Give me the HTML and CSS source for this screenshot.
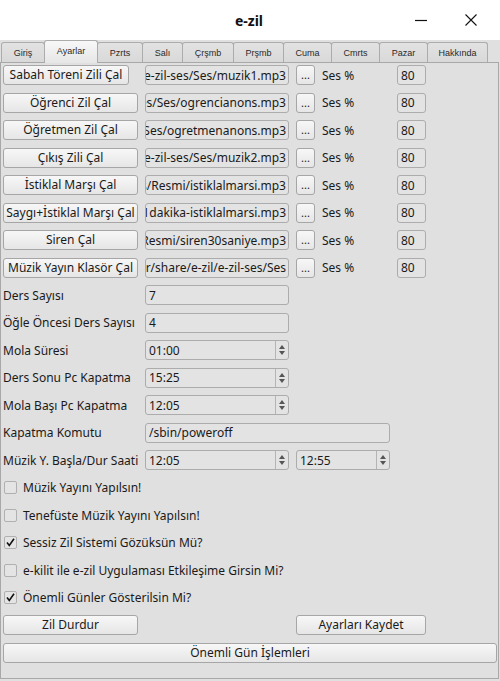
FILE: index.html
```html
<!DOCTYPE html>
<html lang="tr">
<head>
<meta charset="utf-8">
<title>e-zil</title>
<link rel="stylesheet" href="styles.css">
</head>
<body>
<div class="window">
  <header class="titlebar">
    <span class="title">e-zil</span>
    <div class="wm">
      <svg class="wm-btn" width="14" height="14" viewBox="0 0 14 14"><path d="M1 7.5H13" stroke="#111" stroke-width="1.2"/></svg>
      <svg class="wm-btn" width="14" height="14" viewBox="0 0 14 14"><path d="M1.5 1.5L12.5 12.5M12.5 1.5L1.5 12.5" stroke="#111" stroke-width="1.1"/></svg>
    </div>
  </header>
  <nav class="tabs">
    <div class="tab t1">Giriş</div>
    <div class="tab t2 active">Ayarlar</div>
    <div class="tab t3">Pzrts</div>
    <div class="tab t4">Salı</div>
    <div class="tab t5">Çrşmb</div>
    <div class="tab t6">Prşmb</div>
    <div class="tab t7">Cuma</div>
    <div class="tab t8">Cmrts</div>
    <div class="tab t9">Pazar</div>
    <div class="tab t10">Hakkında</div>
  </nav>
  <main class="pane">
    <div class="form">
      <button class="btn narrow">Sabah Töreni Zili Çal</button>
      <div class="field path"><span>/usr/share/e-zil/e-zil-ses/Ses/muzik1.mp3</span></div>
      <button class="btn dots">...</button>
      <span class="lbl">Ses %</span>
      <div class="field vol">80</div>

      <button class="btn">Öğrenci Zil Çal</button>
      <div class="field path"><span>/usr/share/e-zil/e-zil-ses/Ses/ogrencianons.mp3</span></div>
      <button class="btn dots">...</button>
      <span class="lbl">Ses %</span>
      <div class="field vol">80</div>

      <button class="btn">Öğretmen Zil Çal</button>
      <div class="field path"><span>/usr/share/e-zil/e-zil-ses/Ses/ogretmenanons.mp3</span></div>
      <button class="btn dots">...</button>
      <span class="lbl">Ses %</span>
      <div class="field vol">80</div>

      <button class="btn">Çıkış Zili Çal</button>
      <div class="field path"><span>/usr/share/e-zil/e-zil-ses/Ses/muzik2.mp3</span></div>
      <button class="btn dots">...</button>
      <span class="lbl">Ses %</span>
      <div class="field vol">80</div>

      <button class="btn">İstiklal Marşı Çal</button>
      <div class="field path"><span>/usr/share/e-zil/e-zil-ses/Resmi/istiklalmarsi.mp3</span></div>
      <button class="btn dots">...</button>
      <span class="lbl">Ses %</span>
      <div class="field vol">80</div>

      <button class="btn">Saygı+İstiklal Marşı Çal</button>
      <div class="field path"><span>/usr/share/e-zil/e-zil-ses/Resmi/saygi-1dakika-istiklalmarsi.mp3</span></div>
      <button class="btn dots">...</button>
      <span class="lbl">Ses %</span>
      <div class="field vol">80</div>

      <button class="btn">Siren Çal</button>
      <div class="field path"><span>/usr/share/e-zil/e-zil-ses/Resmi/siren30saniye.mp3</span></div>
      <button class="btn dots">...</button>
      <span class="lbl">Ses %</span>
      <div class="field vol">80</div>

      <button class="btn">Müzik Yayın Klasör Çal</button>
      <div class="field path"><span>/usr/share/e-zil/e-zil-ses/Ses</span></div>
      <button class="btn dots">...</button>
      <span class="lbl">Ses %</span>
      <div class="field vol">80</div>

      <span class="lbl first">Ders Sayısı</span>
      <div class="field c2">7</div>

      <span class="lbl first">Öğle Öncesi Ders Sayısı</span>
      <div class="field c2">4</div>

      <span class="lbl first">Mola Süresi</span>
      <div class="field spin c2"><span class="val">01:00</span><span class="arrows"><i class="up"></i><i class="down"></i></span></div>

      <span class="lbl first">Ders Sonu Pc Kapatma</span>
      <div class="field spin c2"><span class="val">15:25</span><span class="arrows"><i class="up"></i><i class="down"></i></span></div>

      <span class="lbl first">Mola Başı Pc Kapatma</span>
      <div class="field spin c2"><span class="val">12:05</span><span class="arrows"><i class="up"></i><i class="down"></i></span></div>

      <span class="lbl first">Kapatma Komutu</span>
      <div class="field c2-4">/sbin/poweroff</div>

      <span class="lbl first">Müzik Y. Başla/Dur Saati</span>
      <div class="field spin c2"><span class="val">12:05</span><span class="arrows"><i class="up"></i><i class="down"></i></span></div>
      <div class="field spin c3-4"><span class="val">12:55</span><span class="arrows"><i class="up"></i><i class="down"></i></span></div>

      <label class="check"><span class="box"></span>Müzik Yayını Yapılsın!</label>
      <label class="check"><span class="box"></span>Tenefüste Müzik Yayını Yapılsın!</label>
      <label class="check"><span class="box checked"><svg width="11" height="11" viewBox="0 0 11 11"><path d="M2 5.5L4.3 8.5L9 1.8" fill="none" stroke="#111" stroke-width="1.6"/></svg></span>Sessiz Zil Sistemi Gözüksün Mü?</label>
      <label class="check"><span class="box"></span>e-kilit ile e-zil Uygulaması Etkileşime Girsin Mi?</label>
      <label class="check"><span class="box checked"><svg width="11" height="11" viewBox="0 0 11 11"><path d="M2 5.5L4.3 8.5L9 1.8" fill="none" stroke="#111" stroke-width="1.6"/></svg></span>Önemli Günler Gösterilsin Mi?</label>

      <button class="btn">Zil Durdur</button>
      <button class="btn c3-5">Ayarları Kaydet</button>

      <button class="btn full">Önemli Gün İşlemleri</button>
    </div>
  </main>
</div>
</body>
</html>
```

FILE: styles.css
```css
* { box-sizing: border-box; }
html, body { margin: 0; padding: 0; }
body {
  width: 500px;
  height: 681px;
  overflow: hidden;
  background: #e0e0e0;
  font-family: "Noto Sans", "DejaVu Sans", sans-serif;
  font-size: 12px;
  color: #1a1a1a;
}
.window { width: 500px; height: 681px; display: flex; flex-direction: column; }

.titlebar {
  height: 40px;
  background: #ffffff;
  display: flex;
  align-items: center;
  justify-content: center;
  position: relative;
  flex: none;
}
.title { font-weight: bold; font-size: 14px; color: #111; margin-left: -2px; }
.wm { position: absolute; right: 22px; top: 13px; display: flex; gap: 36px; }
.wm-btn { display: block; }

.tabs {
  height: 22px;
  flex: none;
  display: flex;
  align-items: flex-end;
  padding-left: 1px;
  background: #e0e0e0;
  font-family: "Liberation Sans", Arial, sans-serif;
  font-size: 9px;
  color: #2a2a2a;
  position: relative;
  z-index: 2;
}
.tab {
  height: 20px;
  border: 1px solid #acacac;
  border-bottom: none;
  border-radius: 3px 3px 0 0;
  background: linear-gradient(#e2e2e2, #d9d9d9);
  display: flex;
  align-items: center;
  justify-content: center;
  margin-right: -1px;
  padding-top: 1px;
}
.tab.active {
  height: 23px;
  margin-bottom: -1px;
  background: linear-gradient(#f8f8f8, #e6e6e6);
  padding-bottom: 4px;
  position: relative;
}
.t1 { width: 44px; }
.t2 { width: 54px; }
.t3 { width: 46px; }
.t4 { width: 41px; }
.t5 { width: 52px; }
.t6 { width: 51px; }
.t7 { width: 49px; }
.t8 { width: 49px; }
.t9 { width: 49px; }
.t10 { width: 61px; }

.pane {
  flex: 1;
  width: 499px;
  margin-bottom: 2px;
  border: 1px solid #a8a8a8;
  background: #e0e0e0;
  padding: 2px 0 0 2px;
}
.form {
  display: grid;
  grid-template-columns: 135px 144px 19px 68px 29px 64px;
  grid-auto-rows: 20px;
  column-gap: 7px;
  row-gap: 7.5px;
  align-items: stretch;
}

.btn {
  font: inherit;
  color: #1a1a1a;
  margin: 0;
  padding: 0 2px;
  border: 1px solid #a6a6a6;
  border-radius: 3px;
  background: linear-gradient(#f7f7f7, #e6e6e6);
  white-space: nowrap;
  overflow: hidden;
  grid-column: 1;
  line-height: 18px;
}
.btn.narrow { width: 126px; }
.btn.dots { grid-column: 3; padding: 0; font-size: 11px; line-height: 16px; }
.btn.c3-5 { grid-column: 3 / 6; }
.btn.full { grid-column: 1 / 7; }

.field {
  border: 1px solid #acacac;
  border-radius: 3px;
  background: #e3e3e3;
  display: flex;
  align-items: center;
  padding: 0 0 0 3px;
  white-space: nowrap;
  overflow: hidden;
}
.field.path { grid-column: 2; justify-content: flex-end; padding: 0 2px 0 0; }
.field.path span { flex: none; }
.field.vol { grid-column: 5; }
.field.c2 { grid-column: 2; }
.field.c2-4 { grid-column: 2 / 5; }
.field.c3-4 { grid-column: 3 / 5; }

.lbl { display: flex; align-items: center; white-space: nowrap; }
.lbl.first { grid-column: 1; }
.form > .lbl:not(.first) { grid-column: 4; }

.spin { padding-right: 0; }
.spin .val { flex: 1; }
.arrows {
  width: 13px;
  align-self: stretch;
  border-left: 1px solid #b4b4b4;
  display: flex;
  flex-direction: column;
  align-items: center;
  justify-content: center;
  gap: 2px;
}
.arrows i { display: block; width: 0; height: 0; border-left: 3.5px solid transparent; border-right: 3.5px solid transparent; }
.arrows .up { border-bottom: 4px solid #555; }
.arrows .down { border-top: 4px solid #555; }

.check {
  grid-column: 1 / 7;
  display: flex;
  align-items: center;
  gap: 6px;
  white-space: nowrap;
  padding-left: 1px;
}
.box {
  width: 13px;
  height: 13px;
  border: 1px solid #b0b0b0;
  border-radius: 2px;
  background: #e4e4e4;
  display: flex;
  align-items: center;
  justify-content: center;
  flex: none;
}
.box svg { display: block; }
```
